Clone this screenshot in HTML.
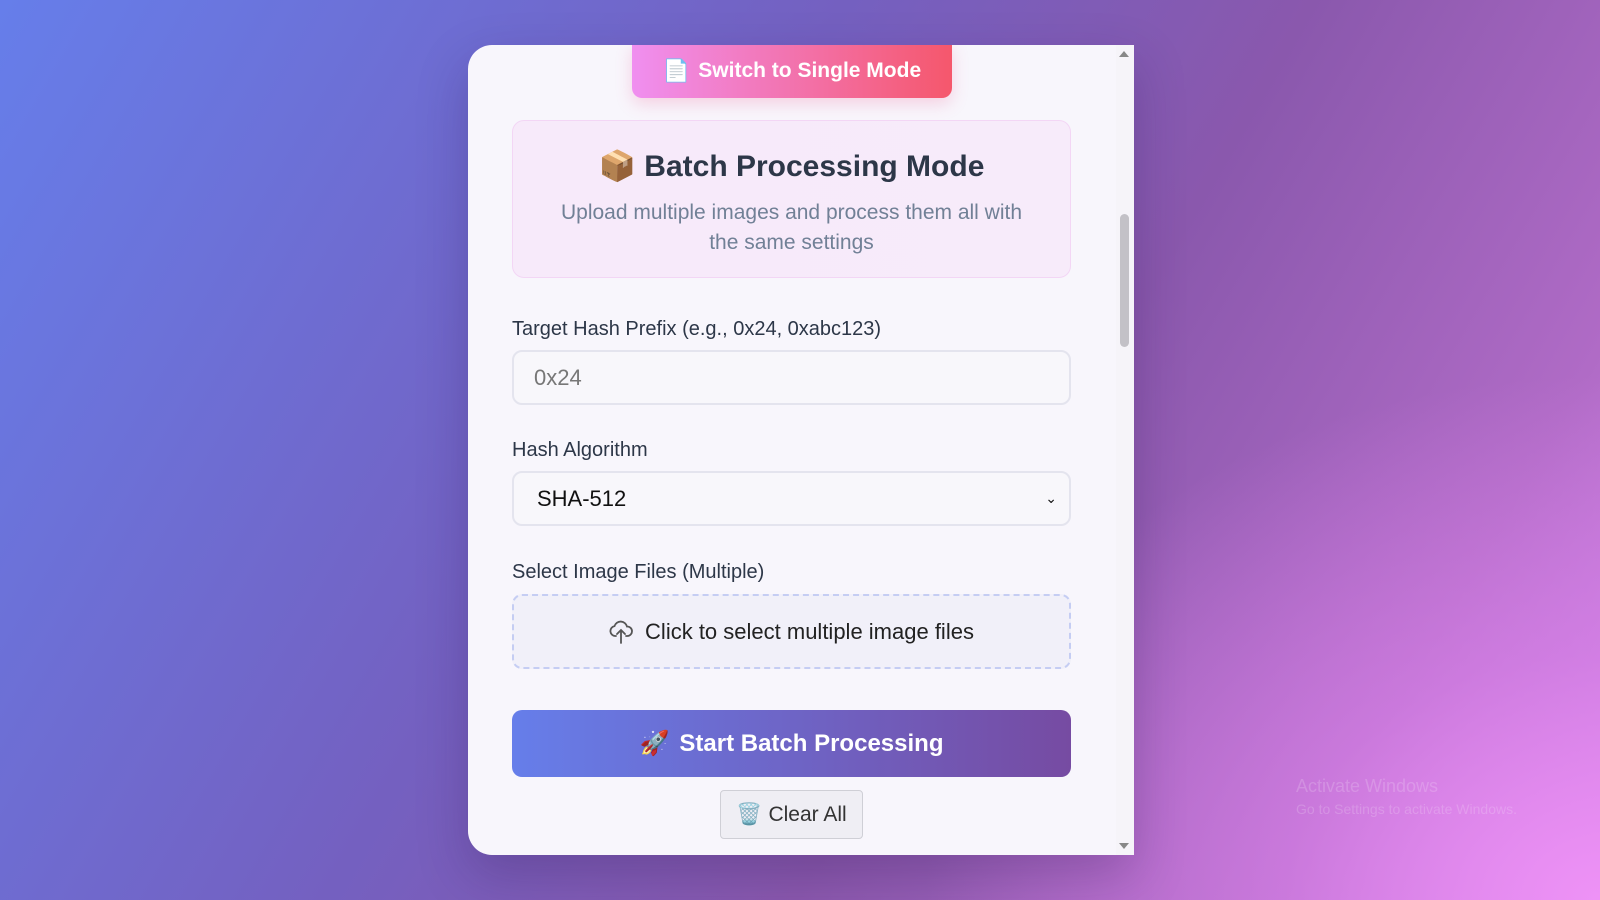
<!DOCTYPE html>
<html><head><meta charset="utf-8"><style>
*{box-sizing:border-box;margin:0;padding:0}
body{width:1600px;height:900px;overflow:hidden;position:relative;font-family:"Liberation Sans","DejaVu Sans",sans-serif;
background:radial-gradient(ellipse 900px 700px at 1600px 900px,#ee92f6 0%,rgba(220,130,235,.6) 35%,rgba(180,100,200,0) 75%),
linear-gradient(120deg,#667eea 0%,#7460c0 40%,#8a58ad 62%,#b06bc6 85%,#d083e6 100%);}
.card{position:absolute;left:468px;top:45px;width:666px;height:810px;background:#f8f6fc;border-radius:24px 0 0 24px;overflow:hidden;box-shadow:0 20px 50px rgba(40,20,80,.25)}
.sb{position:absolute;right:0;top:0;width:18px;height:100%;background:#f6f4f9}
.thumb{position:absolute;right:5px;top:169px;width:9px;height:133px;background:#c3c1c7;border-radius:5px}
.arr{position:absolute;right:5px;width:0;height:0;border-left:5px solid transparent;border-right:5px solid transparent}
.sw{position:absolute;left:164px;top:-2px;width:320px;height:55px;border-radius:0 0 10px 10px;background:linear-gradient(90deg,#f08ff0,#f5576c);color:#fff;font-weight:bold;font-size:21px;display:flex;align-items:center;justify-content:center;gap:8px;box-shadow:0 6px 16px rgba(240,100,150,.25)}
.info{position:absolute;left:44px;top:75px;width:559px;height:158px;border:1px solid #f3d6f5;border-radius:12px;background:linear-gradient(90deg,#f7eafa,#f7ebfa);text-align:center}
.info h2{font-size:30px;color:#2d3748;margin-top:28px;font-weight:bold}
.info p{font-size:21px;color:#718096;line-height:30px;margin-top:14px;padding:0 44px}
.lbl{position:absolute;left:44px;font-size:20px;color:#2d3748}
.inp{position:absolute;left:44px;width:559px;height:55px;border:2px solid #e4e4ee;border-radius:10px;background:#f8f7fb;font-size:22px;display:flex;align-items:center;padding-left:20px}
.drop{position:absolute;left:44px;top:549px;width:559px;height:75px;border:2px dashed #c5cdf3;border-radius:10px;background:#f1f0f9;display:flex;align-items:center;justify-content:center;gap:12px;font-size:22px;color:#222}
.start{position:absolute;left:44px;top:665px;width:559px;height:67px;border-radius:10px;background:linear-gradient(90deg,#667eea,#764ba2);color:#fff;font-weight:bold;font-size:24px;display:flex;align-items:center;justify-content:center;gap:10px}
.clear{position:absolute;left:252px;top:745px;width:143px;height:49px;border:1px solid #cfcfd6;border-radius:4px;background:#efeef4;display:flex;align-items:center;justify-content:center;gap:6px;font-size:21px;color:#333}
.wm{position:absolute;left:1296px;top:776px;color:rgba(255,255,255,.18);font-size:18px}
.wm small{display:block;font-size:14px;margin-top:4px}
</style></head><body>
<div class="card">
<div class="sw"><span style="font-size:22px">📄</span>Switch to Single Mode</div>
<div class="info"><h2>📦 Batch Processing Mode</h2><p>Upload multiple images and process them all with the same settings</p></div>
<div class="lbl" style="top:273px">Target Hash Prefix (e.g., 0x24, 0xabc123)</div>
<div class="inp" style="top:305px;color:#777">0x24</div>
<div class="lbl" style="top:394px">Hash Algorithm</div>
<div class="inp" style="top:426px;color:#111;padding-left:23px">SHA-512<span style="position:absolute;right:12px;font-size:14px">&#8964;</span></div>
<div class="lbl" style="top:516px">Select Image Files (Multiple)</div>
<div class="drop"><svg width="24" height="26" viewBox="0 0 24 26" fill="none" stroke="#555" stroke-width="1.8" stroke-linecap="round"><path d="M7 17H6a5 5 0 0 1-.5-9.9A6.5 6.5 0 0 1 18 7.5a4.5 4.5 0 0 1 .5 9.5H17"/><path d="M12 24V11M8 15l4-4 4 4"/></svg>Click to select multiple image files</div>
<div class="start"><span>🚀</span>Start Batch Processing</div>
<div class="clear"><span>🗑️</span>Clear All</div>
<div class="sb"><div class="arr" style="top:6px;border-bottom:6px solid #888"></div><div class="thumb"></div><div class="arr" style="bottom:6px;border-top:6px solid #888"></div></div>
</div>
<div class="wm">Activate Windows<small>Go to Settings to activate Windows.</small></div>
</body></html>
